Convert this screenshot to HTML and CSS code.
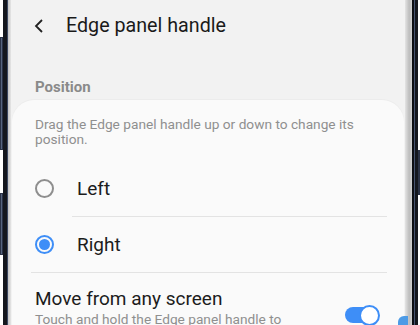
FILE: index.html
```html
<!DOCTYPE html>
<html lang="en">
<head>
    <meta charset="UTF-8">
    <meta name="viewport" content="width=device-width, initial-scale=1.0">
    <title>Edge panel handle</title>
    <link rel="stylesheet" href="styles.css">
</head>
<body>
    <div class="phone">
        <div class="keys keys-left">
            <span class="key key-upper"></span>
            <span class="key key-lower"></span>
        </div>
        <div class="bezel bezel-left"></div>

        <div class="screen">
            <div class="edge edge-left"></div>

            <div class="content">
                <div class="header">
                    <svg class="back" width="10" height="14" viewBox="0 0 10 14">
                        <polyline points="8,1 2,7 8,13" fill="none" stroke="#222" stroke-width="1.8"/>
                    </svg>
                    <h1 class="title">Edge panel handle</h1>
                </div>

                <p class="section-label">Position</p>

                <div class="card">
                    <p class="desc">Drag the Edge panel handle up or down to change its position.</p>

                    <div class="option">
                        <span class="radio"></span>
                        <span class="option-text">Left</span>
                    </div>
                    <div class="divider divider-inset"></div>

                    <div class="option">
                        <span class="radio radio-on"></span>
                        <span class="option-text">Right</span>
                    </div>
                    <div class="divider"></div>

                    <div class="setting">
                        <div class="setting-text">
                            <p class="setting-title">Move from any screen</p>
                            <p class="setting-sub">Touch and hold the Edge panel handle to move it from any screen.</p>
                        </div>
                        <span class="switch"><span class="thumb"></span></span>
                    </div>
                </div>

                <!-- the handle itself, sitting on the screen edge -->
                <span class="edge-handle"></span>
            </div>

            <div class="edge edge-right"></div>
        </div>

        <div class="bezel bezel-right"></div>
        <div class="keys keys-right">
            <span class="key key-side"></span>
        </div>
    </div>
</body>
</html>
```

FILE: styles.css
```css
/* 기본 */
body {
    margin: 0;
    background-color: #ffffff;
    font-family: Roboto, "Liberation Sans", sans-serif;
    color: #1c1c1c;
}

p, h1 {
    margin: 0;
}

.phone {
    display: flex;
    height: 325px;
    overflow: hidden;
}

/* 폰 테두리와 버튼 */
.keys {
    display: flex;
    flex-direction: column;
}

.keys-left {
    width: 3px;
}

.keys-right {
    width: 2px;
}

.key {
    display: block;
    background-color: #56647f;
    border: 1px solid #2a3246;
    box-sizing: border-box;
}

.key-upper {
    margin-top: 37px;
    height: 113px;
}

.key-lower {
    margin-top: 43px;
    height: 62px;
}

.key-side {
    margin-top: 150px;
    height: 45px;
}

.bezel {
    background-color: #14171e;
}

.bezel-left {
    width: 5px;
    box-shadow: inset -1px 0 0 #3c4862;
}

.bezel-right {
    width: 6px;
    box-shadow: inset 2px 0 0 #0d0f14, inset 3px 0 0 #46536f;
}

.screen {
    flex: 1;
    display: flex;
    background-color: #f2f2f2;
}

.edge-left {
    width: 3px;
    background: linear-gradient(to right, #c4c4c4, #e6e6e6);
}

.edge-right {
    width: 7px;
    background: linear-gradient(to right, #e4e4e4, #bdbdbd 60%, #d0d0d0);
}

.content {
    flex: 1;
    position: relative;
}

/* 상단 바 */
.header {
    height: 52px;
    display: flex;
    align-items: center;
    padding-left: 23px;
}

.back {
    display: block;
}

.title {
    margin-left: 22px;
    font-size: 19.7px;
    font-weight: 400;
    line-height: 24px;
    color: #1a1a1a;
}

.section-label {
    margin-top: 26px;
    margin-bottom: 4px;
    padding-left: 24px;
    font-size: 15px;
    font-weight: 700;
    line-height: 18px;
    color: #8a8a8a;
}

/* 카드 */
.card {
    margin: 0 1px;
    height: 240px;
    background-color: #fafafa;
    border-radius: 22px 22px 0 0;
    box-shadow: 0 -1px 0 #ececec;
}

.desc {
    padding: 17px 30px 0 23px;
    margin-bottom: 14px;
    font-size: 13.7px;
    line-height: 15px;
    color: #8f8f8f;
}

.option {
    display: flex;
    align-items: center;
    height: 55px;
    margin: 0 17px 0 19px;
    padding-left: 4px;
}

.option-text {
    margin-left: 23px;
    font-size: 19px;
}

.radio {
    width: 19px;
    height: 19px;
    box-sizing: border-box;
    border: 2px solid #8e8e8e;
    border-radius: 50%;
    display: flex;
    align-items: center;
    justify-content: center;
}

.radio-on {
    border-color: #3e8ef7;
}

.radio-on::after {
    content: "";
    width: 11px;
    height: 11px;
    border-radius: 50%;
    background-color: #3e8ef7;
}

.divider {
    height: 1px;
    margin: 0 17px 0 19px;
    background-color: #e3e3e3;
}

.divider-inset {
    margin-left: 60px;
}

/* 설정 줄 */
.setting {
    display: flex;
    align-items: center;
    padding: 15px 24px 0 23px;
}

.setting-text {
    flex: 1;
    padding-right: 40px;
}

.setting-title {
    font-size: 19px;
    line-height: 22px;
    margin-bottom: 2px;
}

.setting-sub {
    font-size: 13.7px;
    line-height: 15px;
    color: #8f8f8f;
}

.switch {
    position: relative;
    width: 35px;
    height: 21px;
    display: flex;
    align-items: center;
}

.switch::before {
    content: "";
    width: 30px;
    height: 16px;
    border-radius: 8px;
    background-color: #3e8ef7;
}

.thumb {
    position: absolute;
    right: 0;
    top: 0;
    width: 21px;
    height: 21px;
    box-sizing: border-box;
    border: 2px solid #3e8ef7;
    border-radius: 50%;
    background-color: #ffffff;
}

.edge-handle {
    position: absolute;
    right: -3px;
    top: 316px;
    width: 10px;
    height: 40px;
    border-radius: 6px 0 0 6px;
    background-color: #4d9be6;
}
```
